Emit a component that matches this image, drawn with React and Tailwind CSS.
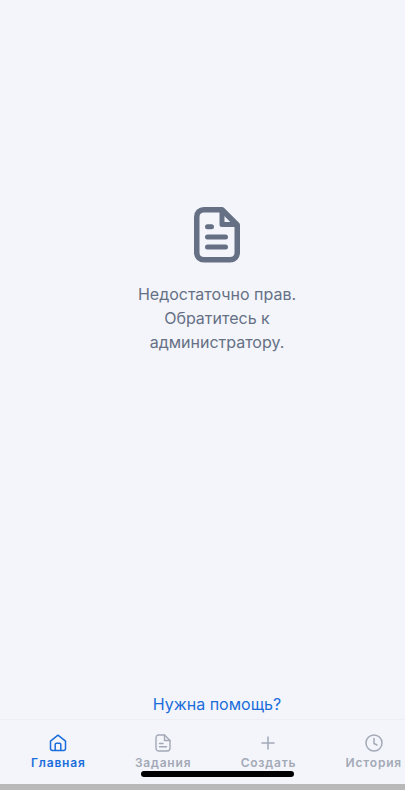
import React from "react";

const FONT = "font-['Inter','Noto_Sans',sans-serif]";

function DocIcon() {
  return (
    <svg width="46" height="56" viewBox="0 0 46 56" fill="none">
      <path
        d="M10 2.75H28L43.25 18V45.5C43.25 49.8 40.3 52.75 36 52.75H10C5.7 52.75 2.75 49.8 2.75 45.5V10C2.75 5.7 5.7 2.75 10 2.75Z"
        stroke="#667085"
        strokeWidth="5.5"
        strokeLinejoin="round"
      />
      <path d="M28 3V17.5H43" stroke="#667085" strokeWidth="5" strokeLinejoin="round" />
      <path d="M13.5 19.7H17.5M13.5 30H31.5M13.5 40H31.5" stroke="#667085" strokeWidth="5" strokeLinecap="round" />
    </svg>
  );
}

function HomeIcon({ color }) {
  return (
    <svg width="18" height="18" viewBox="0 0 18 18" fill="none" stroke={color} strokeWidth="1.5" strokeLinejoin="round">
      <path d="M1.5 7.2L9 1.2L16.5 7.2V14.5C16.5 15.8 15.7 16.5 14.5 16.5H3.5C2.3 16.5 1.5 15.8 1.5 14.5V7.2Z" />
      <path d="M6.2 16.5V10.5C6.2 9.7 6.7 9.2 7.5 9.2H10.5C11.3 9.2 11.8 9.7 11.8 10.5V16.5" />
    </svg>
  );
}

function TaskIcon({ color }) {
  return (
    <svg width="16" height="18" viewBox="0 0 16 18" fill="none" stroke={color} strokeWidth="1.4" strokeLinecap="round" strokeLinejoin="round">
      <path d="M3.5 1H9.5L15 6.5V14C15 15.8 14 17 12.2 17H3.5C1.8 17 1 15.8 1 14V4C1 2.2 1.8 1 3.5 1Z" />
      <path d="M9.5 1V6.5H15" />
      <path d="M4.5 9.5H8M4.5 12.8H11.5" />
    </svg>
  );
}

function PlusIcon({ color }) {
  return (
    <svg width="14" height="14" viewBox="0 0 14 14" fill="none" stroke={color} strokeWidth="1.5" strokeLinecap="round">
      <path d="M7 1V13M1 7H13" />
    </svg>
  );
}

function ClockIcon({ color }) {
  return (
    <svg width="18" height="18" viewBox="0 0 18 18" fill="none" stroke={color} strokeWidth="1.5" strokeLinecap="round" strokeLinejoin="round">
      <circle cx="9" cy="9" r="8" />
      <path d="M9 4.5V9.5L12 11" />
    </svg>
  );
}

const TABS = [
  { label: "Главная", Icon: HomeIcon, active: true },
  { label: "Задания", Icon: TaskIcon, active: false },
  { label: "Создать", Icon: PlusIcon, active: false },
  { label: "История", Icon: ClockIcon, active: false },
];

export default function App() {
  return (
    <div className={`${FONT} relative flex h-[790px] w-[405px] flex-col overflow-hidden bg-[#f3f5fa]`}>
      <main className="flex flex-1 flex-col items-center pl-[29px] pt-[207px]">
        <DocIcon />
        <p className="mt-[19px] w-[170px] text-center text-[16px] leading-[24px] text-[#667085]">
          Недостаточно прав. Обратитесь к администратору.
        </p>
        <button className="mt-auto mb-[3px] text-[16px] leading-[24px] text-[#1a6ddb]">Нужна помощь?</button>
      </main>

      <nav className="flex h-[65px] justify-between border-t border-[#eceef3] pl-[31px] pr-[3px] pt-[14px]">
        {TABS.map(({ label, Icon, active }) => (
          <div key={label} className="flex flex-col items-center">
            <div className="flex h-[18px] items-center">
              <Icon color={active ? "#1a6ddb" : "#a3a9b6"} />
            </div>
            <span className={`mt-[3px] text-[12px] font-semibold leading-[16px] tracking-[0.8px] ${active ? "text-[#1a6ddb]" : "text-[#a3a9b6]"}`}>
              {label}
            </span>
          </div>
        ))}
      </nav>

      <div className="h-[6px] bg-[#b9b9b9]" />
      <div className="absolute left-[141px] top-[771px] h-[6px] w-[153px] rounded-full bg-black" />
    </div>
  );
}
